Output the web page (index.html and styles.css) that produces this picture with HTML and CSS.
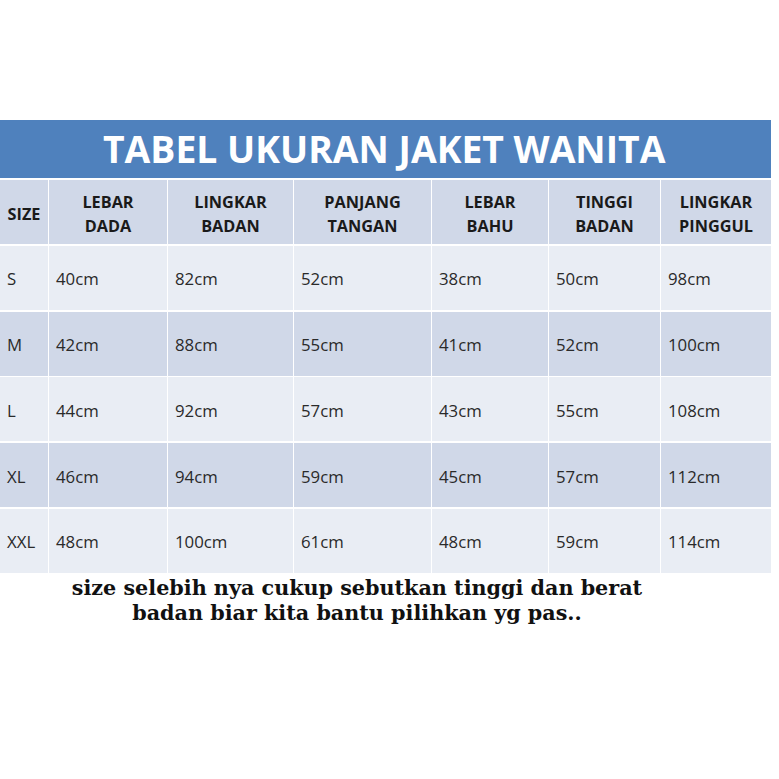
FILE: index.html
```html
<!DOCTYPE html>
<html lang="id">
<head>
<meta charset="utf-8">
<title>Tabel Ukuran Jaket Wanita</title>
<link rel="stylesheet" href="styles.css">
</head>
<body>
<div class="page">
  <div class="sheet">
    <div class="title">TABEL UKURAN JAKET WANITA</div>
    <div class="grid">
      <div class="cell head size">SIZE</div>
      <div class="cell head">LEBAR<br>DADA</div>
      <div class="cell head">LINGKAR<br>BADAN</div>
      <div class="cell head">PANJANG<br>TANGAN</div>
      <div class="cell head">LEBAR<br>BAHU</div>
      <div class="cell head">TINGGI<br>BADAN</div>
      <div class="cell head">LINGKAR<br>PINGGUL</div>

      <div class="cell odd">S</div>
      <div class="cell odd">40cm</div>
      <div class="cell odd">82cm</div>
      <div class="cell odd">52cm</div>
      <div class="cell odd">38cm</div>
      <div class="cell odd">50cm</div>
      <div class="cell odd">98cm</div>

      <div class="cell even">M</div>
      <div class="cell even">42cm</div>
      <div class="cell even">88cm</div>
      <div class="cell even">55cm</div>
      <div class="cell even">41cm</div>
      <div class="cell even">52cm</div>
      <div class="cell even">100cm</div>

      <div class="cell odd">L</div>
      <div class="cell odd">44cm</div>
      <div class="cell odd">92cm</div>
      <div class="cell odd">57cm</div>
      <div class="cell odd">43cm</div>
      <div class="cell odd">55cm</div>
      <div class="cell odd">108cm</div>

      <div class="cell even">XL</div>
      <div class="cell even">46cm</div>
      <div class="cell even">94cm</div>
      <div class="cell even">59cm</div>
      <div class="cell even">45cm</div>
      <div class="cell even">57cm</div>
      <div class="cell even">112cm</div>

      <div class="cell odd">XXL</div>
      <div class="cell odd">48cm</div>
      <div class="cell odd">100cm</div>
      <div class="cell odd">61cm</div>
      <div class="cell odd">48cm</div>
      <div class="cell odd">59cm</div>
      <div class="cell odd">114cm</div>
    </div>
  </div>
  <p class="note">size selebih nya cukup sebutkan tinggi dan berat<br>badan biar kita bantu pilihkan yg pas..</p>
</div>
</body>
</html>
```

FILE: styles.css
```css
html, body {
  margin: 0;
  padding: 0;
  background: #ffffff;
}

.page {
  width: 779px;
  height: 779px;
  padding-top: 120px;
  box-sizing: border-box;
}

.sheet {
  width: 771px;
  display: flex;
  flex-direction: column;
  gap: 2px;
}

.title {
  height: 58px;
  background: #4f81bd;
  color: #ffffff;
  font-family: "Open Sans", sans-serif;
  font-weight: 700;
  font-size: 37.3px;
  line-height: 58px;
  padding-left: 103px;
}

.grid {
  display: grid;
  grid-template-columns: 48px 118px 125px 137px 116px 111px 110px;
  grid-auto-rows: 64px;
  column-gap: 1px;
  row-gap: 1.8px;
  background: #ffffff;
}

.cell {
  display: flex;
  align-items: center;
  padding-left: 7px;
  padding-top: 2px;
  box-sizing: border-box;
  font-family: "Open Sans", sans-serif;
  font-size: 16.8px;
  color: #2a2a2a;
}

.head {
  background: #d0d8e8;
  justify-content: center;
  text-align: center;
  padding-left: 0;
  padding-top: 4px;
  font-weight: 700;
  font-size: 16.3px;
  line-height: 24px;
  color: #1a1a1a;
}

.head.size {
  font-size: 16.3px;
}

.odd {
  background: #e9edf4;
}

.even {
  background: #d0d8e8;
}

.note {
  margin: 3px 0 0 0;
  width: 714px;
  text-align: center;
  font-family: "DejaVu Serif", serif;
  font-weight: 700;
  font-size: 20.7px;
  line-height: 25px;
  color: #111111;
}
```
